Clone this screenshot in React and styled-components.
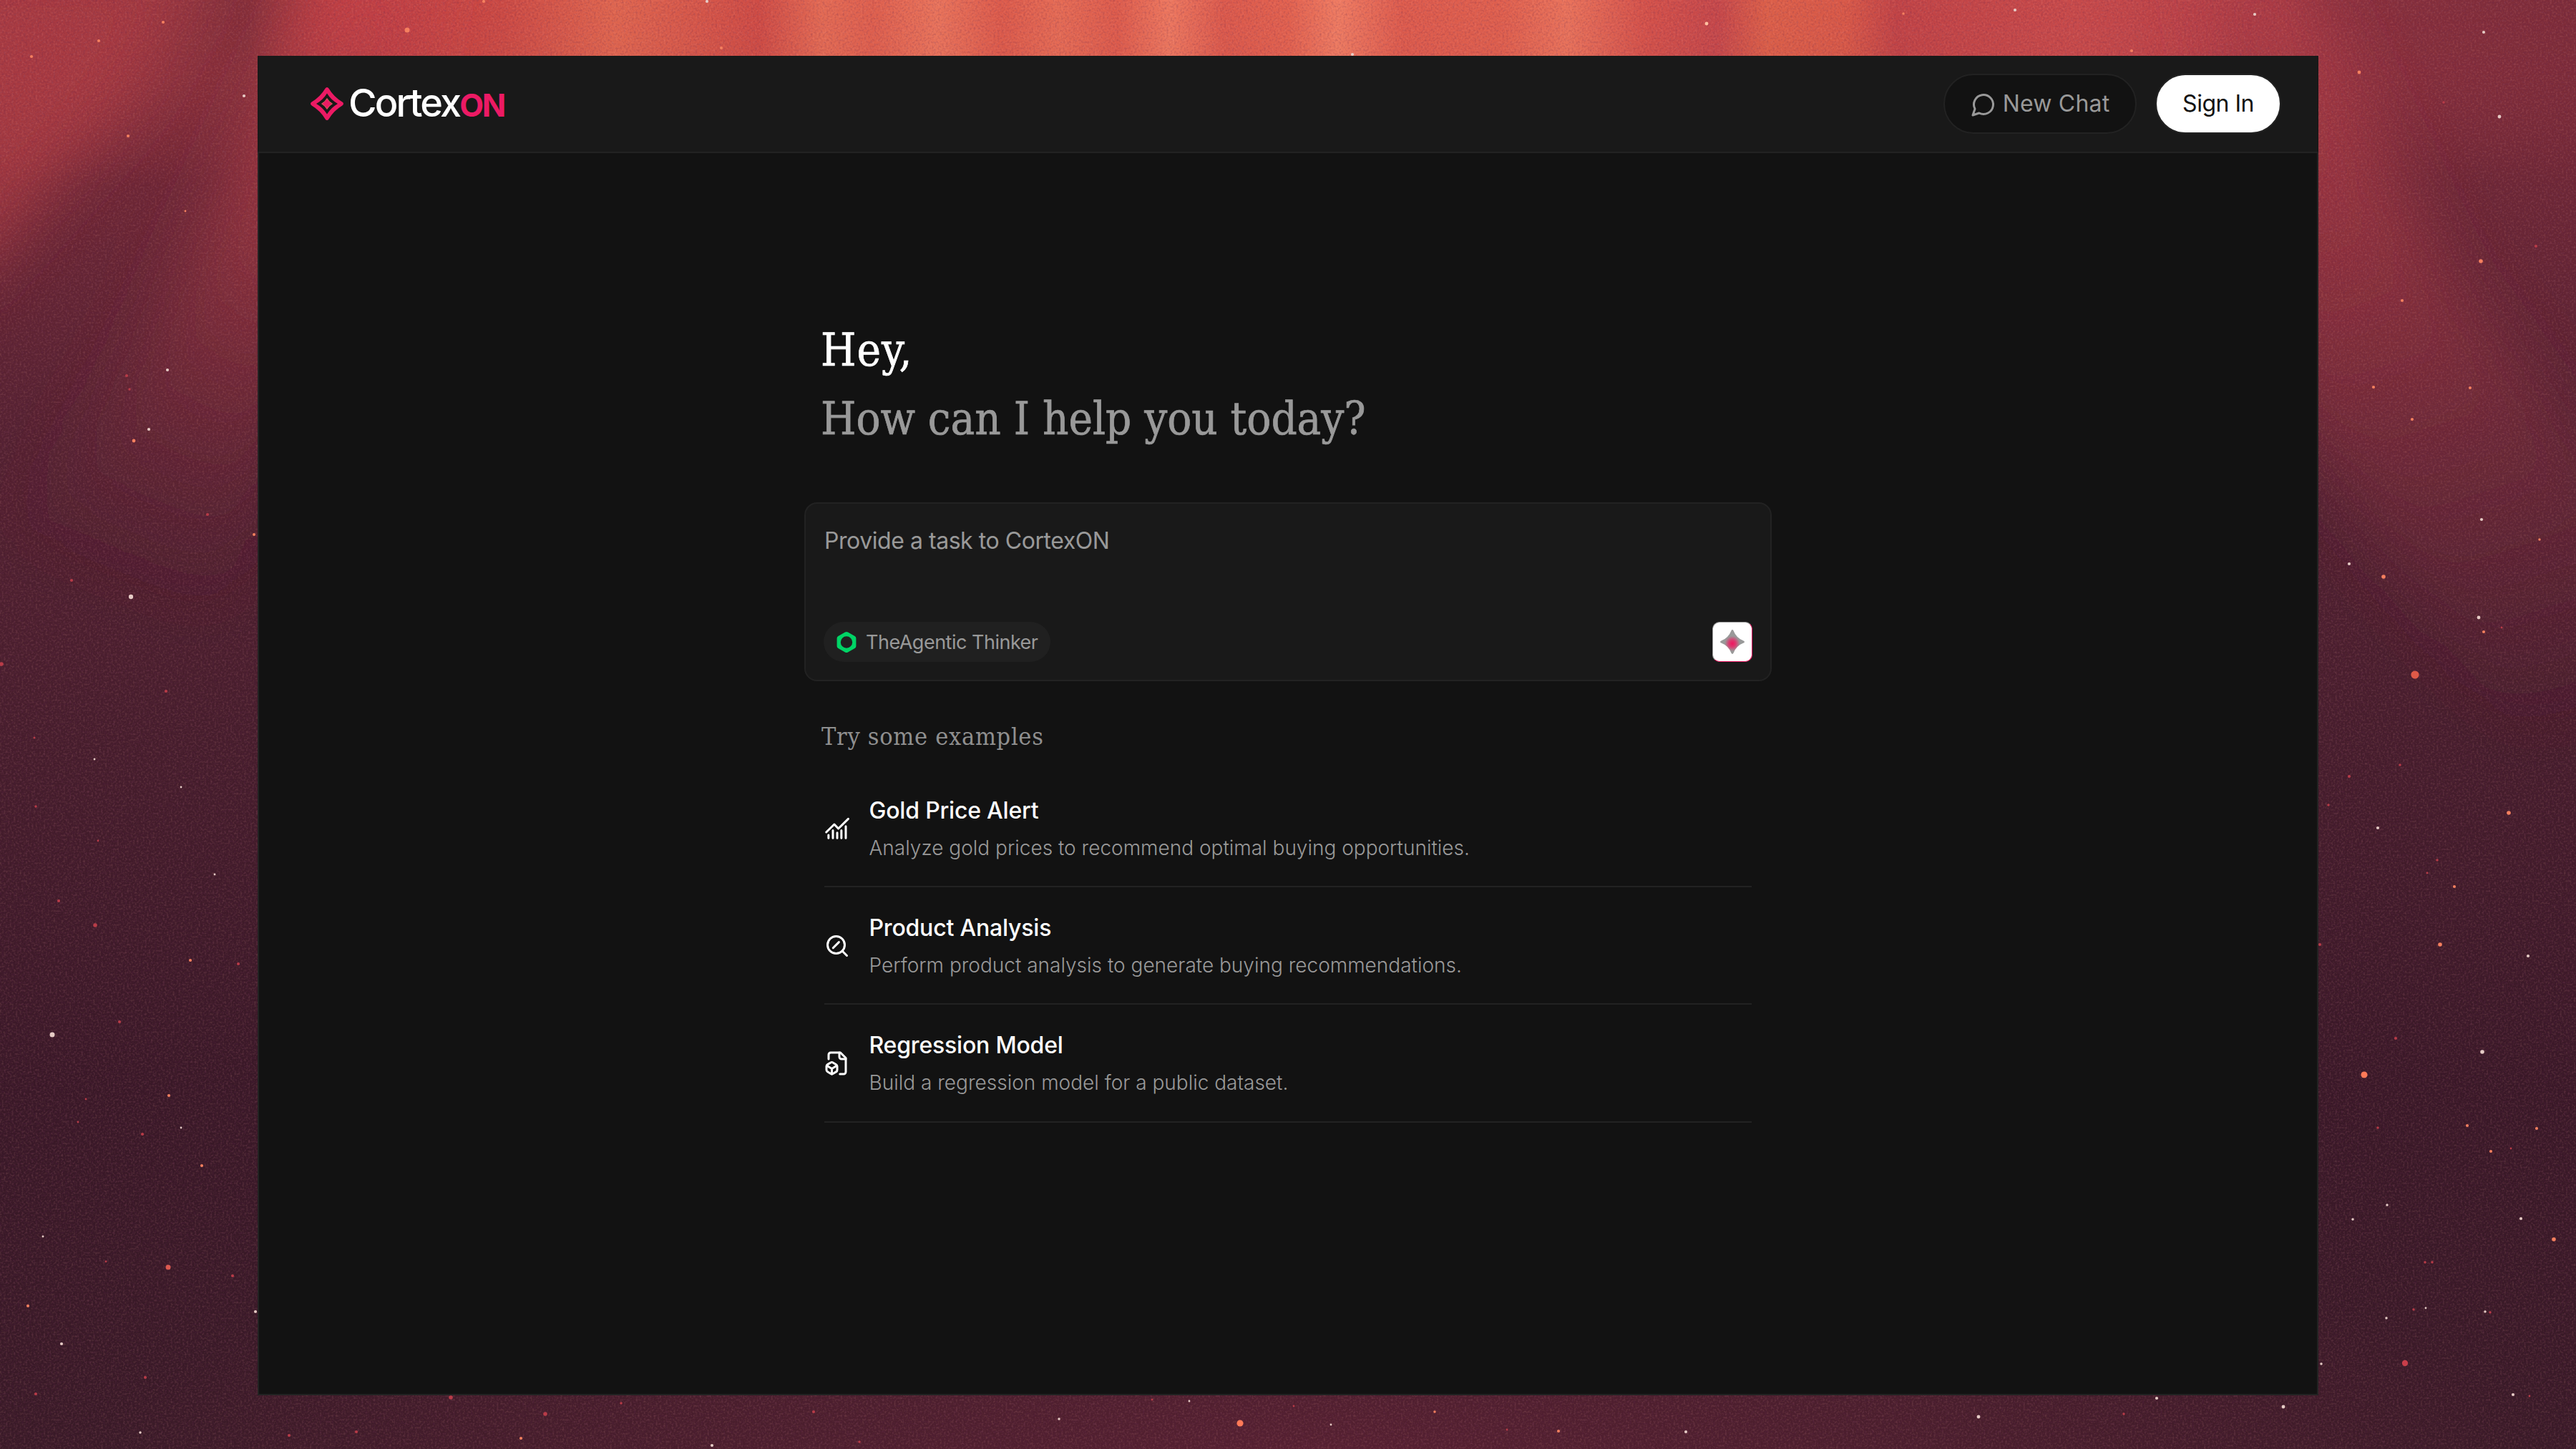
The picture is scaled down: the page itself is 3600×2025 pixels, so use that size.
import React from "react";
import styled, { createGlobalStyle } from "styled-components";

const Global = createGlobalStyle`
  * { box-sizing: border-box; }
  html, body, #root { margin: 0; height: 100%; }
  body { background: #3a1a28; overflow: hidden; }
`;

const sans = `Inter, "Liberation Sans", sans-serif`;
const serif = `"DejaVu Serif Condensed", "DejaVu Serif", serif`;

const Desktop = styled.div`
  position: relative;
  width: 3600px;
  height: 2025px;
  padding: 78px 360px 75px;
  overflow: hidden;
`;

const Wallpaper = styled.svg`
  position: absolute;
  inset: 0;
  width: 100%;
  height: 100%;
`;

const Window = styled.div`
  position: relative;
  height: 1872px;
  display: flex;
  flex-direction: column;
  background: #121212;
  font-family: ${sans};
`;

const Header = styled.header`
  height: 136px;
  flex: none;
  display: flex;
  align-items: center;
  justify-content: space-between;
  padding: 0 52px 0 74px;
  background: #191919;
  border-bottom: 2px solid #222;
`;

const Brand = styled.div`
  display: flex;
  align-items: center;
  gap: 7px;
`;

const Wordmark = styled.div`
  display: flex;
  align-items: baseline;
  padding-top: 1px;
  line-height: 60px;
`;

const Cortex = styled.span`
  font-size: 54px;
  font-weight: 500;
  letter-spacing: -2.9px;
  color: #fff;
`;

const On = styled.span`
  font-size: 44px;
  font-weight: 700;
  letter-spacing: -2.4px;
  color: #ec1a64;
`;

const Actions = styled.div`
  display: flex;
  align-items: center;
  gap: 26px;
`;

const Pill = styled.button`
  height: 84px;
  width: ${(p) => p.$width}px;
  padding: 0;
  display: flex;
  align-items: center;
  justify-content: center;
  gap: 9px;
  border: 2px solid #222;
  border-radius: 42px;
  background: ${(p) => (p.$primary ? "#fff" : "#121212")};
  color: ${(p) => (p.$primary ? "#121212" : "#999")};
  font: 400 32px/40px ${sans};
  letter-spacing: ${(p) => (p.$primary ? "-0.5px" : "0.2px")};
`;

const Main = styled.main`
  flex: 1;
  display: flex;
  flex-direction: column;
  align-items: center;
  padding-top: 228px;
  border: 2px solid #222;
  border-top: 0;
`;

const Column = styled.div`
  width: 1352px;
  display: flex;
  flex-direction: column;
`;

const Greeting = styled.h1`
  margin: 0 0 0 23px;
  font: 400 63px/96px ${serif};
  letter-spacing: ${(p) => (p.$muted ? "-0.05px" : "1px")};
  color: ${(p) => (p.$muted ? "#999" : "#fff")};
  -webkit-text-stroke: 0.7px currentColor;
`;

const Composer = styled.section`
  height: 250px;
  margin-top: 68px;
  padding: 27px 25px 25px;
  display: flex;
  flex-direction: column;
  justify-content: space-between;
  background: #191919;
  border: 2px solid #222;
  border-radius: 18px;
`;

const Placeholder = styled.div`
  padding: 1px 0 0 1px;
  font-size: 32px;
  line-height: 48px;
  letter-spacing: -0.45px;
  color: #999;
`;

const ComposerBar = styled.div`
  display: flex;
  align-items: center;
  justify-content: space-between;
`;

const ModelChip = styled.div`
  height: 56px;
  width: 317px;
  padding-left: 18px;
  display: flex;
  align-items: center;
  gap: 13px;
  border-radius: 28px;
  background: #202020;
  color: #999;
  font-size: 27px;
  letter-spacing: -0.5px;
`;

const Send = styled.button`
  width: 56px;
  height: 56px;
  padding: 0;
  display: grid;
  place-items: center;
  border: 1px solid #999;
  border-right-color: #ec1a64;
  border-bottom-color: #ec1a64;
  border-radius: 10px;
  background: #fff;
`;

const SectionLabel = styled.h2`
  margin: 53px 0 0 24px;
  font: 400 34px/48px ${serif};
  letter-spacing: 0.7px;
  color: #8f8f8f;
`;

const Examples = styled.ul`
  margin: 23px 28px 0;
  padding: 0;
  list-style: none;
`;

const Example = styled.li`
  height: 164.2px;
  display: flex;
  align-items: center;
  gap: 26.5px;
  border-bottom: 2px solid #222;
`;

const ExampleText = styled.div`
  display: flex;
  flex-direction: column;
  gap: 7px;
`;

const ExampleTitle = styled.div`
  font-size: 32px;
  line-height: 49px;
  font-weight: 500;
  letter-spacing: -0.2px;
  color: #fff;
`;

const ExampleNote = styled.div`
  font-size: 28px;
  line-height: 42px;
  font-weight: 300;
  color: #999;
`;

const IconSvg = styled.svg`
  width: 36px;
  height: 36px;
  flex: none;
  fill: none;
  stroke: currentColor;
  stroke-width: 2;
  stroke-linecap: round;
  stroke-linejoin: round;
  margin-top: 2px;
  color: ${(p) => p.$color || "#fff"};
`;

const ChatIcon = () => (
  <IconSvg viewBox="0 0 24 24" $color="#999">
    <path d="M7.9 20A9 9 0 1 0 4 16.1L2 22Z" />
  </IconSvg>
);
const ChartIcon = () => (
  <IconSvg viewBox="0 0 24 24">
    <path d="M1.8 15.3 9.3 8l3.8 4 9.2-9.1M3.9 18v2.9M8 13.6v7.3M12 15.8v5.1M15.9 13.6v7.3M20 9.8v11.1" />
  </IconSvg>
);
const SearchIcon = () => (
  <IconSvg viewBox="0 0 24 24">
    <path d="m13.6 8.4-5.4 5.4M21 21l-4.3-4.3" />
    <circle cx="11" cy="11" r="8" />
  </IconSvg>
);
const FileBoxIcon = () => (
  <IconSvg viewBox="0 0 24 24">
    <path d="M14.5 22H18a2 2 0 0 0 2-2V7l-5-5H6a2 2 0 0 0-2 2v4" />
    <path d="M14 2v4a2 2 0 0 0 2 2h4" />
    <path d="M3 13.1a2 2 0 0 0-1 1.76v3.24a2 2 0 0 0 .97 1.78L6 21.7a2 2 0 0 0 2.03.01L11 19.9a2 2 0 0 0 1-1.76V14.9a2 2 0 0 0-.97-1.78L8 11.3a2 2 0 0 0-2.03-.01Z" />
    <path d="M7 17v5M11.7 14.2 7 17l-4.7-2.8" />
  </IconSvg>
);

const Logo = () => (
  <svg width="46" height="46" viewBox="0 0 46 46">
    <path
      fillRule="evenodd"
      fill="#ec1a64"
      d="M23 0q1.5 0 2.4 1.600Q32.500 13.500 44.400 20.600 46 21.600 46 23t-1.600 2.400Q32.500 32.500 25.400 44.400 24.500 46 23 46t-2.400-1.600Q13.500 32.500 1.600 25.400 0 24.400 0 23t1.600-2.400Q13.500 13.500 20.600 1.600 21.500 0 23 0ZM23 8.500Q17.500 17.500 8 23q9.500 5.500 15 14.500Q28.500 28.500 38 23 28.500 17.500 23 8.500Z"
    />
    <path d="M23 15.500q2.600 4.900 7.500 7.500-4.900 2.600-7.500 7.500-2.600-4.900-7.500-7.500 4.900-2.600 7.500-7.500Z" fill="#ec1a64" stroke="#e8795a" strokeWidth=".8" />
  </svg>
);

const HexIcon = () => (
  <svg width="28" height="29" viewBox="0 0 28 29">
    <path fillRule="evenodd" fill="#00d466" d="M14 0q1 0 2 .6l9.600 5.400q1.800 1 1.800 3v11q0 2-1.800 3L16 28.400q-2 1.100-4 0L2.400 23q-1.800-1-1.800-3V9q0-2 1.800-3L12 .6Q13 0 14 0ZM14 6.300a8.200 8.200 0 1 0 0 16.400 8.200 8.200 0 0 0 0-16.400Z" />
  </svg>
);

const SparkIcon = () => (
  <svg width="34" height="34" viewBox="0 0 34 34">
    <defs>
      <radialGradient id="spark" cx="50%" cy="57%" r="31%">
        <stop offset="0" stopColor="#f0145f" />
        <stop offset=".45" stopColor="#dc3a70" />
        <stop offset="1" stopColor="#999" />
      </radialGradient>
    </defs>
    <path fill="url(#spark)" d="M17 0q1 0 1.600 1.400Q22.500 11.500 32.600 15.400 34 16 34 17t-1.400 1.600Q22.500 22.500 18.600 32.600 18 34 17 34t-1.600-1.400Q11.500 22.500 1.400 18.600 0 18 0 17t1.400-1.600Q11.500 11.500 15.400 1.400 16 0 17 0Z" />
  </svg>
);

const rayStops = [
  [0, "#9a3540"], [345, "#84303a"], [480, "#bf3f42"], [700, "#cc4a44"], [860, "#e0664f"], [1060, "#cf4c45"],
  [1150, "#e46b54"], [1220, "#df604e"], [1310, "#ea745b"], [1400, "#dd5b4b"], [1480, "#e66c55"], [1560, "#de5c4c"],
  [1635, "#ee785f"], [1710, "#dc5a4c"], [1800, "#e3624f"], [1870, "#f07c62"], [1960, "#de5c4d"], [2100, "#e0604e"],
  [2190, "#ea735b"], [2300, "#d5524a"], [2400, "#c6484a"], [2470, "#dd6049"], [2580, "#d95948"], [2650, "#c24446"],
  [2900, "#c84a4a"], [3100, "#b94147"], [3220, "#8c303d"], [3600, "#7c2c39"],
];

// [x, y, radius, colour]
const W = "#e6ccc6", O = "#f5805f", R = "#b83c48";
const stars = [
  [228, 31, 3, O], [138, 57, 3, O], [44, 79, 3, O], [569, 42, 5, O], [179, 190, 3, O], [259, 295, 2, O], [341, 134, 3, W],
  [234, 517, 3, W], [177, 525, 3, R], [181, 544, 2.500, R], [208, 600, 3, W], [187, 616, 3.500, O], [290, 719, 3, R], [355, 747, 3, O],
  [100, 811, 3, R], [183, 834, 4.500, W], [2, 928, 4, R], [232, 966, 3, R], [48, 1031, 2, R], [132, 1061, 2, W], [253, 1100, 2, W],
  [50, 1127, 2.500, R], [137, 1175, 2, R], [300, 1222, 2, W], [82, 1259, 3, R], [133, 1293, 4, R], [266, 1342, 3, O], [333, 1347, 3, R],
  [73, 1446, 5, W], [167, 1428, 3, R], [236, 1531, 3, O], [253, 1576, 2, W], [120, 1536, 2, R], [109, 1568, 2, R], [199, 1585, 3, R],
  [282, 1629, 3, O], [60, 1728, 2, W], [148, 1763, 2, R], [235, 1771, 5, "#dc5a50"], [325, 1783, 3, R], [39, 1825, 3, O], [357, 1833, 3, W],
  [86, 1878, 3, W], [203, 1925, 3, R], [50, 1948, 3, R],
  [3471, 45, 3, W], [3297, 101, 3.500, O], [3493, 163, 3.500, W], [3415, 143, 2.500, R], [3467, 365, 4, O], [3357, 420, 3, O],
  [3544, 344, 3, R], [3317, 541, 3, O], [3371, 586, 3, O], [3452, 542, 3, O], [3468, 726, 3, W], [3549, 754, 2.500, O],
  [3283, 788, 3, W], [3331, 806, 4, O], [3464, 863, 3.500, W], [3471, 883, 3, O], [3496, 877, 2, R], [3375, 943, 8, "#e05a48"],
  [3283, 1085, 3, R], [3354, 1069, 2.500, R], [3254, 1125, 2.500, R], [3323, 1157, 3, W], [3506, 1136, 4, O], [3406, 1202, 2.500, R],
  [3392, 1220, 2, R], [3430, 1239, 3, O], [3242, 1320, 3, R], [3410, 1320, 4, O], [3533, 1336, 3, W], [3348, 1451, 3, R],
  [3469, 1470, 4, W], [3304, 1502, 6.500, "#ff7a58"], [3323, 1576, 2.500, R], [3448, 1573, 3, O], [3545, 1577, 3, O], [3481, 1609, 3, O],
  [3509, 1605, 2, R], [3336, 1684, 2.500, W], [3288, 1704, 2.500, W], [3523, 1703, 3, W], [3569, 1732, 4, O], [3389, 1764, 2.500, R],
  [3399, 1764, 2.500, R], [3335, 1842, 2.500, W], [3373, 1830, 2.500, R], [3390, 1828, 2, W], [3473, 1833, 2.500, W], [3480, 1834, 2.500, R],
  [3361, 1905, 6, "#c83e4a"], [3244, 1906, 2.500, W], [3512, 1949, 3, W], [3535, 1951, 2, R],
  [630, 1953, 4, R], [868, 1961, 2.500, R], [762, 1976, 4, R], [1137, 1973, 3, R], [1610, 1956, 2, R], [1662, 1958, 2, W],
  [1480, 1983, 2.500, W], [1733, 1989, 6.500, "#ff7a58"], [1808, 1965, 2, R], [1860, 1991, 2, W], [2005, 1973, 2.500, O], [2178, 2000, 3, O],
  [2106, 1998, 2, R], [2356, 2001, 3, W], [2765, 1980, 3.500, W], [3014, 1954, 3, W], [2968, 1976, 2.500, R], [3191, 1966, 3.500, W],
  [498, 2001, 3, R], [404, 2006, 3, R], [728, 2010, 3, O], [196, 2002, 2.500, W], [995, 2020, 3, W], [1201, 2015, 2.500, R],
  [1008, 67, 3, O], [988, 2, 3, W], [676, 2, 3, O], [1890, 76, 3, W], [2385, 33, 3.500, "#ffc0a0"], [2660, 19, 2.500, O],
  [2816, 14, 3, W], [2979, 71, 3, O], [3151, 20, 3, W],
];

const Backdrop = () => (
  <Wallpaper viewBox="0 0 3600 2025" preserveAspectRatio="none">
    <defs>
      <linearGradient id="base" x1="0" y1="0" x2="0" y2="1">
        <stop offset="0" stopColor="#7e2c3a" />
        <stop offset=".15" stopColor="#6a2635" />
        <stop offset=".3" stopColor="#542131" />
        <stop offset=".5" stopColor="#461d2c" />
        <stop offset=".75" stopColor="#391827" />
        <stop offset="1" stopColor="#391a27" />
      </linearGradient>
      <radialGradient id="floor" gradientUnits="userSpaceOnUse" cx="0" cy="0" r="1" gradientTransform="translate(1850 2040) scale(1700 400)">
        <stop offset="0" stopColor="#562031" />
        <stop offset=".5" stopColor="#4e1f2e" stopOpacity=".8" />
        <stop offset="1" stopColor="#4e1f2e" stopOpacity="0" />
      </radialGradient>
      <linearGradient id="rays" gradientUnits="userSpaceOnUse" x1="0" y1="0" x2="3600" y2="0">
        {rayStops.map(([x, c]) => <stop key={x} offset={x / 3600} stopColor={c} />)}
      </linearGradient>
      <linearGradient id="fade" x1="0" y1="0" x2="0" y2="1">
        <stop offset="0" stopColor="#fff" />
        <stop offset=".4" stopColor="#f4f4f4" />
        <stop offset="1" stopColor="#000" />
      </linearGradient>
      <mask id="top"><rect width="3600" height="260" fill="url(#fade)" /></mask>
      <linearGradient id="left" gradientUnits="userSpaceOnUse" x1="440" y1="0" x2="120" y2="800">
        <stop offset="0" stopColor="#c24045" />
        <stop offset=".4" stopColor="#8c313c" stopOpacity=".95" />
        <stop offset=".75" stopColor="#6e2836" stopOpacity=".5" />
        <stop offset="1" stopColor="#5a2231" stopOpacity="0" />
      </linearGradient>
      <linearGradient id="right" gradientUnits="userSpaceOnUse" x1="3180" y1="0" x2="3520" y2="1050">
        <stop offset="0" stopColor="#b03c45" />
        <stop offset=".35" stopColor="#8c303c" stopOpacity=".95" />
        <stop offset=".7" stopColor="#702a38" stopOpacity=".55" />
        <stop offset="1" stopColor="#5a2231" stopOpacity="0" />
      </linearGradient>
      <filter id="soft" x="-50%" y="-50%" width="200%" height="200%"><feGaussianBlur stdDeviation="46" /></filter>
      <filter id="grain" x="0" y="0" width="100%" height="100%">
        <feTurbulence type="fractalNoise" baseFrequency=".36" numOctaves="2" seed="4" />
        <feColorMatrix values="0 0 0 0 .95  0 0 0 0 .4  0 0 0 0 .36  1.600 0 0 0 -.72" />
      </filter>
      <filter id="shade" x="0" y="0" width="100%" height="100%">
        <feTurbulence type="fractalNoise" baseFrequency=".36" numOctaves="2" seed="9" />
        <feColorMatrix values="0 0 0 0 .12  0 0 0 0 .02  0 0 0 0 .08  1.600 0 0 0 -.72" />
      </filter>
    </defs>
    <rect width="3600" height="2025" fill="url(#base)" />
    <rect width="3600" height="2025" fill="url(#floor)" />
    <rect width="3600" height="260" fill="url(#rays)" mask="url(#top)" />
    <g filter="url(#soft)">
      <path d="M-80 -60H290L180 140 -80 430Z" fill="#ab3a42" opacity=".82" />
      <path d="M470 -40H600L480 400 300 860 -60 1100 -60 860 190 500Z" fill="url(#left)" />
      <path d="M3080 -60H3200L3420 380 3720 760V1300L3180 560Z" fill="url(#right)" />
    </g>
    <rect width="3600" height="2025" filter="url(#grain)" opacity=".24" />
    <rect width="3600" height="2025" filter="url(#shade)" opacity=".38" />
    {stars.map(([x, y, r, c]) => <circle key={`${x}-${y}`} cx={x} cy={y} r={r * 0.7} fill={c} />)}
  </Wallpaper>
);

const examples = [
  { Icon: ChartIcon, title: "Gold Price Alert", note: "Analyze gold prices to recommend optimal buying opportunities." },
  { Icon: SearchIcon, title: "Product Analysis", note: "Perform product analysis to generate buying recommendations." },
  { Icon: FileBoxIcon, title: "Regression Model", note: "Build a regression model for a public dataset." },
];

export default function App() {
  return (
    <>
      <Global />
      <Desktop>
        <Backdrop />
        <Window>
          <Header>
            <Brand>
              <Logo />
              <Wordmark><Cortex>Cortex</Cortex><On>ON</On></Wordmark>
            </Brand>
            <Actions>
              <Pill $width={270}><ChatIcon />New Chat</Pill>
              <Pill $width={176} $primary>Sign In</Pill>
            </Actions>
          </Header>
          <Main>
            <Column>
              <Greeting>Hey,</Greeting>
              <Greeting $muted>How can I help you today?</Greeting>
              <Composer>
                <Placeholder>Provide a task to CortexON</Placeholder>
                <ComposerBar>
                  <ModelChip><HexIcon />TheAgentic Thinker</ModelChip>
                  <Send><SparkIcon /></Send>
                </ComposerBar>
              </Composer>
              <SectionLabel>Try some examples</SectionLabel>
              <Examples>
                {examples.map(({ Icon, title, note }) => (
                  <Example key={title}>
                    <Icon />
                    <ExampleText>
                      <ExampleTitle>{title}</ExampleTitle>
                      <ExampleNote>{note}</ExampleNote>
                    </ExampleText>
                  </Example>
                ))}
              </Examples>
            </Column>
          </Main>
        </Window>
      </Desktop>
    </>
  );
}
